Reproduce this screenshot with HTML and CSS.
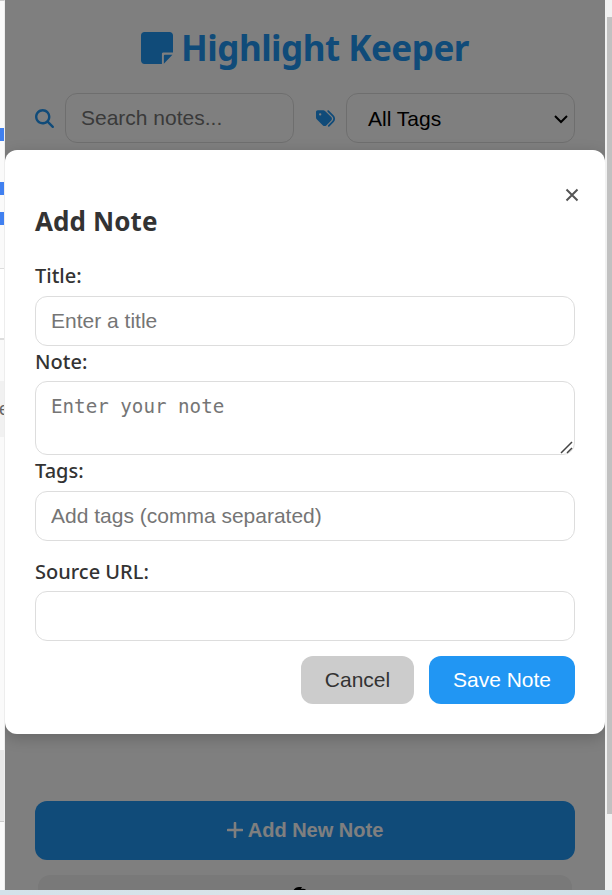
FILE: index.html
```
<!DOCTYPE html>
<html lang="en">
<head>
<meta charset="utf-8">
<title>Highlight Keeper</title>
<link rel="stylesheet" href="styles.css">
</head>
<body>
<div class="desktop">
  <aside class="behind">
    <i class="mark mark-first"></i><i class="mark mark-second"></i><i class="mark mark-third"></i>
    <i class="card-edge"></i>
    <div class="behind-text"><span>e</span></div>
    <i class="behind-lower"></i>
  </aside>
  <div class="popup">
    <main class="app">
      <h1><svg class="note-icon" viewBox="0 32 448 448"><path d="M48 32C21 32 0 53 0 80V432c0 27 21 48 48 48H293V340c0-11 9-20 20-20H448V80c0-27-21-48-48-48H48zM440 352H336c-9 0-16 7-16 16v108z"/></svg><span>Highlight Keeper</span></h1>
      <div class="filters">
        <svg class="filter-icon" viewBox="0 0 512 512"><path d="M416 208c0 45.9-14.9 88.3-40 122.7L502.6 457.4c12.5 12.5 12.5 32.8 0 45.3s-32.8 12.5-45.3 0L330.7 376c-34.4 25.2-76.8 40-122.7 40C93.1 416 0 322.9 0 208S93.1 0 208 0S416 93.1 416 208zM208 352a144 144 0 1 0 0-288 144 144 0 1 0 0 288z"/></svg>
        <input class="field" placeholder="Search notes...">
        <svg class="filter-icon tags-icon" viewBox="0 0 512 512"><path d="M345 39.1L472.8 168.4c52.4 53 52.4 138.2 0 191.2L360.8 472.9c-9.3 9.4-24.5 9.5-33.9 .2s-9.5-24.5-.2-33.9L438.6 325.9c33.9-34.3 33.9-89.4 0-123.7L310.9 72.9c-9.3-9.4-9.2-24.6 .2-33.9s24.6-9.2 33.9 .2zM0 229.5V80C0 53.5 21.5 32 48 32H197.5c17 0 33.3 6.7 45.3 18.7l168 168c25 25 25 65.5 0 90.5L277.3 442.7c-25 25-65.5 25-90.5 0l-168-168C6.7 262.7 0 246.5 0 229.5zM144 144a32 32 0 1 0 -64 0 32 32 0 1 0 64 0z"/></svg>
        <div class="field select"><span>All Tags</span><svg viewBox="0 0 14 10"><path d="M1 2l6 6 6-6"/></svg></div>
      </div>
      <button class="add"><svg viewBox="0 0 16 16"><path d="M8 1v14M1 8h14"/></svg><span>Add New Note</span></button>
      <div class="next-card"><svg viewBox="0 0 14 14"><path d="M0 4Q2 0 6 0H9L8 2Q12 1 14 4V14H10V4H5V14H0z"/></svg></div>
    </main>
    <div class="overlay">
      <form class="modal">
        <button type="button" class="close" aria-label="Close"><svg viewBox="0 0 14 14"><path d="M1.5 1.5l11 11M12.5 1.5l-11 11"/></svg></button>
        <h2><span>Add Note</span></h2>
        <label for="title"><span>Title:</span></label>
        <input id="title" class="field" placeholder="Enter a title">
        <label class="low" for="note"><span>Note:</span></label>
        <div class="note-wrap">
          <textarea id="note" class="field" placeholder="Enter your note"></textarea>
          <svg class="grip" viewBox="0 0 14 14"><path d="M1 12L12 1M7 12l5-5"/></svg>
        </div>
        <label for="tags"><span>Tags:</span></label>
        <input id="tags" class="field" placeholder="Add tags (comma separated)">
        <label class="low source" for="url"><span>Source URL:</span></label>
        <input id="url" class="field">
        <div class="actions"><button type="button" class="cancel">Cancel</button><button type="button" class="save">Save Note</button></div>
      </form>
    </div>
  </div>
  <div class="scrollbar"><i></i></div>
  <footer class="taskbar"></footer>
</div>
</body>
</html>
```
FILE: styles.css
```
* { box-sizing: border-box; }
body { margin: 0; overflow: hidden; }
.desktop { display: grid; grid-template: 890px 5px / 5px 600px 7px; width: 612px; }
svg { display: block; flex: none; fill: currentColor; }
button { border: 0; padding: 0; font-family: "Liberation Sans", Arial, sans-serif; }

.behind { display: flex; flex-direction: column; overflow: hidden; background: #fafafa; border-top: 1px solid #ccc; border-right: 1px solid #ededed; }
.behind i { flex: none; }
.mark { height: 13px; background: #4080f0; }
.mark-first { margin-top: 127px; }
.mark-second { margin-top: 41px; }
.mark-third { margin-top: 17px; }
.card-edge { height: 72px; margin-top: 43px; background: #fff; border: solid #ddd; border-width: 1px 0 2px; }
.behind-text { height: 56px; margin: 41px 0 0; padding-top: 16px; background: #f1f1f1; font: 18px/24px "Liberation Sans", Arial, sans-serif; color: #666; }
.behind-text span { margin-left: -1px; }
.behind-lower { height: 72px; margin-top: 313px; background: #e8e8e8; border-bottom: 1px solid #ccc; }

.popup { position: relative; overflow: hidden; background: #fff; }
.app { display: flex; flex-direction: column; padding: 18px 30px 0; }
h1 { display: flex; align-items: center; justify-content: center; gap: 8px; height: 60px; margin: 0; color: #2196f3; font: bold 35px/60px "Noto Sans", "Open Sans", sans-serif; letter-spacing: -.5px; }
.note-icon { width: 32px; height: 32px; }
.filters { display: flex; align-items: center; height: 50px; margin-top: 15px; }
.filter-icon { width: 19px; height: 19px; margin-right: 11px; color: #2196f3; }
.tags-icon { margin-left: 22px; }
.field { display: block; width: 100%; height: 50px; padding: 0 15px; border: 1px solid #ddd; border-radius: 12px; background: #fff; color: #000; font: 21px "Liberation Sans", Arial, sans-serif; outline: 0; }
.field::placeholder { color: #757575; opacity: 1; }
.filters .field { flex: none; width: 229px; }
.select { display: flex; align-items: center; justify-content: space-between; }
.filters .select { padding: 2px 6px 0 21px; }
.select svg { width: 14px; height: 10px; fill: none; stroke: #000; stroke-width: 2; }
.add { display: flex; align-items: center; justify-content: center; gap: 5px; height: 59px; margin-top: 658px; border-radius: 12px; background: #2196f3; color: #fff; font-size: 20px; font-weight: bold; }
.add svg { width: 16px; height: 16px; margin-bottom: 2px; stroke: #fff; stroke-width: 2.6; stroke-linecap: round; }
.next-card { display: flex; justify-content: center; height: 50px; margin: 15px 3px 0; padding-top: 12px; border-radius: 12px; background: #f2f2f2; }
.next-card svg { width: 14px; height: 14px; margin-right: 10px; }

.overlay { position: absolute; inset: 0; padding-top: 150px; background: rgba(0, 0, 0, .5); }
.modal { display: flex; flex-direction: column; height: 584px; padding: 38px 30px 30px; border-radius: 12px; background: #fff; color: #333; box-shadow: 0 4px 15px rgba(0, 0, 0, .2); }
.close { align-self: flex-end; width: 14px; height: 14px; margin-right: -4px; background: none; color: #555; }
.close svg { width: 14px; height: 14px; stroke: #555; stroke-width: 2; }
h2 { height: 40px; margin: -1px 0 20px; font: bold 26px/40px "Noto Sans", "Open Sans", sans-serif; letter-spacing: .1px; }
label { height: 30px; margin-bottom: 5px; font: 500 20px/30px "Noto Sans", "Open Sans", sans-serif; }
.low { line-height: 32px; }
.note-wrap { position: relative; height: 74px; margin-bottom: 1px; }
.note-wrap .field { height: 74px; padding-top: 13px; resize: none; font: 19.2px/24px "DejaVu Sans Mono", monospace; }
.grip { position: absolute; right: 1px; bottom: 0; width: 14px; height: 14px; stroke: #444; stroke-width: 1.5; }
.source { margin-top: 15px; }
.actions { display: flex; justify-content: flex-end; gap: 15px; margin-top: 15px; }
.actions button { height: 48px; border-radius: 12px; font-size: 21px; }
.actions .cancel { width: 113px; background: #ccc; color: #333; }
.actions .save { width: 146px; background: #2196f3; color: #fff; }

.scrollbar { padding: 17px 0 0 2px; background: #f1f1f1; }
.scrollbar i { display: block; height: 797px; background: #c1c1c1; }
.taskbar { grid-column: 1 / -1; background: linear-gradient(90deg, #d3e2ea, #dbe4e8 60%, #cfdfe7); }
```
